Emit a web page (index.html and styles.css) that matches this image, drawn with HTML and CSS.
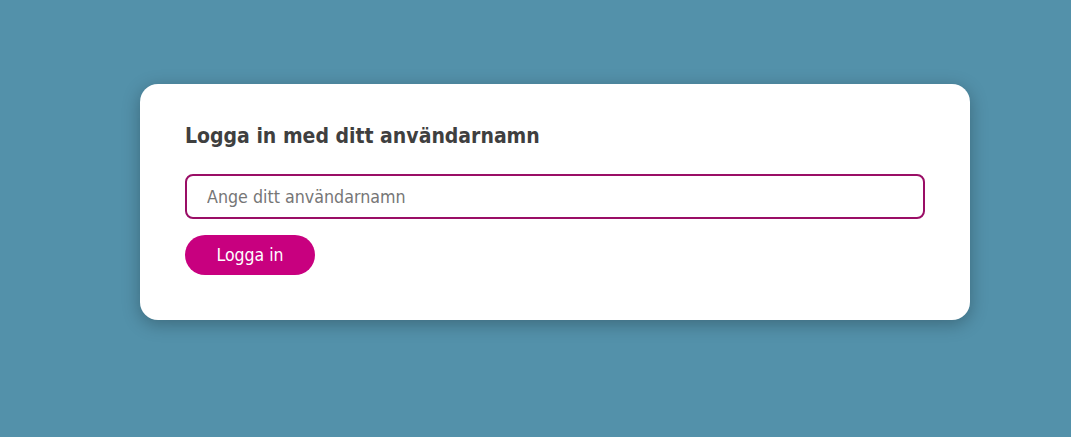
FILE: index.html
```html
<!DOCTYPE html>
<html lang="sv">
<head>
<meta charset="utf-8">
<title>Logga in</title>
<link rel="stylesheet" href="styles.css">
</head>
<body>
<main class="page">
  <section class="card">
    <h1 class="title">Logga in med ditt användarnamn</h1>
    <form class="form">
      <input class="field" type="text" placeholder="Ange ditt användarnamn">
      <button class="btn" type="button">Logga in</button>
    </form>
  </section>
</main>
</body>
</html>
```
FILE: styles.css
```css
html, body {
  margin: 0;
  padding: 0;
  height: 100%;
}
body {
  background: #5391aa;
  font-family: "DejaVu Sans Condensed", "DejaVu Sans", sans-serif;
}
.page {
  display: flex;
  padding: 84px 0 0 140px;
}
.card {
  box-sizing: border-box;
  width: 830px;
  height: 236px;
  background: #fff;
  border-radius: 18px;
  box-shadow: 0 4px 18px rgba(0, 0, 0, 0.28);
  padding: 38px 45px 0 45px;
}
.title {
  margin: 0;
  font-size: 21px;
  font-weight: bold;
  color: #3f3f3f;
  line-height: 28px;
}
.form {
  display: flex;
  flex-direction: column;
  align-items: flex-start;
  gap: 16px;
  margin-top: 24px;
}
.field {
  box-sizing: border-box;
  width: 740px;
  height: 45px;
  border: 2px solid #9a0e66;
  border-radius: 8px;
  padding: 0 20px;
  font-family: inherit;
  font-size: 17.7px;
  color: #333;
  outline: none;
}
.field::placeholder {
  color: #767676;
}
.btn {
  box-sizing: border-box;
  width: 130px;
  height: 40px;
  border: none;
  border-radius: 20px;
  background: #c8007f;
  color: #fff;
  font-family: inherit;
  font-size: 17.5px;
  cursor: pointer;
}
```
